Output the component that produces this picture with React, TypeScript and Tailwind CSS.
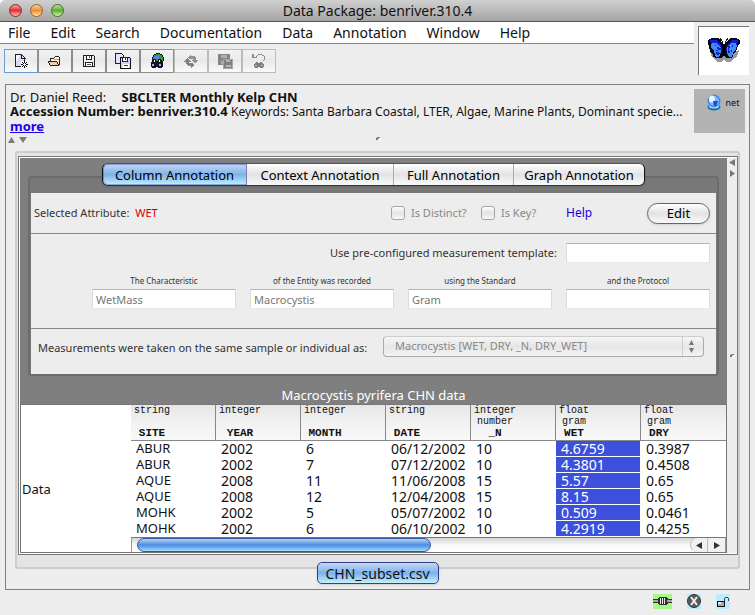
import type { ReactNode } from "react";

const menus = ["File", "Edit", "Search", "Documentation", "Data", "Annotation", "Window", "Help"];

const columns = [
  { type: "string", unit: "", name: "SITE" },
  { type: "integer", unit: "", name: "YEAR" },
  { type: "integer", unit: "", name: "MONTH" },
  { type: "string", unit: "", name: "DATE" },
  { type: "integer", unit: "number", name: "_N" },
  { type: "float", unit: "gram", name: "WET" },
  { type: "float", unit: "gram", name: "DRY" },
];

const rows = [
  ["ABUR", "2002", "6", "06/12/2002", "10", "4.6759", "0.3987"],
  ["ABUR", "2002", "7", "07/12/2002", "10", "4.3801", "0.4508"],
  ["AQUE", "2008", "11", "11/06/2008", "15", "5.57", "0.65"],
  ["AQUE", "2008", "12", "12/04/2008", "15", "8.15", "0.65"],
  ["MOHK", "2002", "5", "05/07/2002", "10", "0.509", "0.0461"],
  ["MOHK", "2002", "6", "06/10/2002", "10", "4.2919", "0.4255"],
];

function Icon({ children, w = 18, h = 16 }: { children: ReactNode; w?: number; h?: number }) {
  return (
    <svg width={w} height={h} viewBox={`0 0 ${w} ${h}`} shapeRendering="crispEdges" aria-hidden="true">
      {children}
    </svg>
  );
}

const NewIcon = () => (
  <Icon>
    <path d="M3.5 1.5h6l3 3v9h-9z" fill="#d9d9fb" stroke="#222" />
    <path d="M4 2h4l-4 7z" fill="#fff" />
    <path d="M9.500 1v4h4" fill="none" stroke="#222" />
    <path d="M9 8h8v8H9z" fill="#f3f3f3" />
    <path d="M12 8h1v2h-1zM12 13h1v2h-1zM9 11h2v1H9zM14 11h2v1h-2zM10 9h1v1h-1zM14 9h1v1h-1zM10 13h1v1h-1zM14 13h1v1h-1zM11 10h1v1h-1zM13 10h1v1h-1zM11 12h1v1h-1zM13 12h1v1h-1z" fill="#111" />
  </Icon>
);
const OpenIcon = () => (
  <Icon>
    <path d="M4 5h4l1-1h4l1 1v7h-1l-9 0z" fill="#fff3da" />
    <path d="M4 5h4v1H4zM8 4h1v1H8zM9 3h4v1H9zM13 4h1v8h-1zM4 6h1v2H4z" fill="#222" />
    <path d="M2 8h9v1H2zM2 9h1v1H2zM3 10h1v2H3zM4 12h9v1H4zM11 9h1v2h-1zM12 11h1v1h-1z" fill="#222" />
    <path d="M3 9h8v1H3zM4 10h7v1H4zM4 11h8v1H4z" fill="#f4d0a0" />
    <path d="M8 6h5v1H8z" fill="#c9a06a" />
  </Icon>
);
const SaveIcon = () => (
  <Icon>
    <path d="M3.500 2.500h10l1 1v10h-11z" fill="#eee" stroke="#222" />
    <path d="M6.500 2.500h5v4h-5zM5.500 9.500h7v4h-7z" fill="#fff" stroke="#222" />
    <path d="M9.500 3v2M7 11.500h4" stroke="#555" />
  </Icon>
);
const SaveAllIcon = () => (
  <Icon>
    <path d="M1.500 .5h6l2 2v8h-8z" fill="#e2e2ff" stroke="#222" />
    <path d="M6.500 4.500h9l1 1v10h-10z" fill="#cfcffd" stroke="#111" />
    <path d="M8.500 4.500h5v4h-5z" fill="#fff" stroke="#222" />
    <path d="M9 11h6v4H9z" fill="#fff" />
    <path d="M11.500 5v2M10 12.500h4" stroke="#333" />
  </Icon>
);
const SearchIcon = () => (
  <Icon>
    <circle cx="10" cy="6" r="5.500" fill="#2f9936" stroke="#111" />
    <path d="M6 3h5v3H8v2H5zM12 6h2v3h-2z" fill="#5a83dc" />
    <path d="M3.500 9.500l2-3h2l1 3h1l1-3h2l2 4v3l-2 1h-2l-1-2h-1l-1 2h-3l-1-2z" fill="#151530" stroke="#111" />
    <path d="M4 11h2v2H4zM11 11h2v2h-2z" fill="#a9acef" />
    <path d="M6 7h1v2H6zM11 7h1v2h-1z" fill="#fff" />
  </Icon>
);
const RefreshIcon = () => (
  <Icon>
    <path d="M6 4l3-3v2h3l2 2v2h2l-3 4-4-4h2V6H8v1z" fill="#929292" />
    <path d="M12 12l-3 3v-2H6l-2-2V9H2l3-4 4 4H7v1h3V9z" fill="#838383" />
  </Icon>
);
const SavesOffIcon = () => (
  <Icon>
    <path d="M2 1h12v11H2z" fill="#858585" />
    <path d="M5 2h6v3H5zM5 8h3v3H5z" fill="#b0b0b0" />
    <path d="M7.500 6.500h9v9h-9z" fill="#808080" stroke="#a5a5a5" />
    <path d="M10 7h4v2h-4zM10 12h5v2h-5z" fill="#b5b5b5" />
  </Icon>
);
const ReSearchIcon = () => (
  <Icon>
    <path d="M3 1h1v3h3v1H2V1zM6 3h1v1H6zM7 2h1v1H7zM8 1h4v1H8zM12 2h2v1h-2zM14 3h1v4h-1zM13 7h1v1h-1z" fill="#8c8c8c" />
    <path d="M4 11l2-2h2l1 2 1-2h2l2 3v2l-2 1h-2l-1-2-1 2H5l-1-2z" fill="#808080" />
    <path d="M5 12h2v1H5zM11 12h2v1h-2z" fill="#b8b8b8" />
  </Icon>
);

const tools = [
  { label: "New data package", icon: <NewIcon /> },
  { label: "Open", icon: <OpenIcon /> },
  { label: "Save", icon: <SaveIcon /> },
  { label: "Save copies", icon: <SaveAllIcon /> },
  { label: "Search", icon: <SearchIcon /> },
  { label: "Refresh", icon: <RefreshIcon />, off: true },
  { label: "Save search", icon: <SavesOffIcon />, off: true },
  { label: "Revise search", icon: <ReSearchIcon />, off: true },
];

function Butterfly() {
  return (
    <svg width="34" height="28" viewBox="0 0 34 28" shapeRendering="crispEdges" aria-hidden="true">
      <path d="M3 13l5 2 4 5 5-3 5 3 5-5 5-2-2 7-3 1-3 4h-4l-3-2-3 2h-4l-3-4-3-2z" fill="#999" />
      <path d="M13 1l2 3 1 3M21 1l-2 3-1 3" stroke="#222" fill="none" />
      <path d="M1 3l4-2h6l3 3 2 3h2l2-3 3-3h6l4 2v3l-2 3-2 6-3 2v3l-3 1h-4l-2-4-2 4H9l-3-1v-3l-3-2-1-6-1-3z" fill="#070716" />
      <path d="M3 3h6l5 5 1 6-2-1-3-3-4 1-2-4zM31 3h-6l-5 5-1 6 2-1 3-3 4 1 2-4z" fill="#171bdc" />
      <path d="M5 6h5l4 5v5l-2 4h-3l-2-6-2-2-1-3zM29 6h-5l-4 5v5l2 4h3l2-6 2-2 1-3z" fill="#3e8cf5" />
      <path d="M10 10h2v1h2v2h-3v1H9v-1h2zM9 15h3v1h2v1h-2v1h-2zM21 9h2v2h-1v3h1v2h-2zM25 8h1v2h-1zM24 13h1v2h-1zM8 8h1v1H8z" fill="#1720c7" />
      <path d="M16 7h2v12h-2z" fill="#000" />
    </svg>
  );
}

const seg = "h-[21px] border-r border-[#aaa] text-[13px] leading-[20px] whitespace-nowrap text-black last:border-r-0 last:rounded-r-[5px]";
const glossy = "bg-linear-to-b from-white via-[#e3e3e3] to-[#fafafa]";
const aqua = "bg-linear-to-b from-[#c5d8f1] via-[#7db2eb] to-[#c4f0ff]";
const field =
  "block h-5 w-36 border border-t-[#b5b5b5] border-x-[#dcdcdc] border-b-[#e8e8e8] bg-white px-[3px] text-[11px] leading-4 text-[#777]";

function Dimple() {
  return (
    <svg width="5" height="4" viewBox="0 0 5 4" aria-hidden="true">
      <path d="M0 3V1l2-1h2v1L2 2v1z" fill="#777" />
      <path d="M2 2l2-1 1 2-2 1z" fill="#fff" />
    </svg>
  );
}

function Field({ label, value }: { label: string; value: string }) {
  return (
    <label className="block w-36">
      <span className="block h-[15px] text-center text-[8px] leading-[13px]">{label}</span>
      <input className={field} defaultValue={value} disabled />
    </label>
  );
}

export default function App() {
  return (
    <div className="min-h-screen bg-[#ededed] font-['Noto_Sans',sans-serif] text-[#111]">
      <header className="bg-white">
        <div className="relative flex h-[22px] items-center justify-center rounded-t-[5px] border-b border-[#555] bg-linear-to-b from-[#d0d0d0] to-[#a5a5a5]">
          <div className="absolute left-[9px] flex gap-2">
            <button aria-label="Close" className="size-[13px] rounded-full border border-[#8b2a2a] bg-linear-to-b from-[#e8a0a0] via-[#dd2c36] to-[#ffb8b8]" />
            <button aria-label="Minimise" className="size-[13px] rounded-full border border-[#9b6320] bg-linear-to-b from-[#f2cfa0] via-[#ec8f2e] to-[#ffe8a0]" />
            <button aria-label="Zoom" className="size-[13px] rounded-full border border-[#3d7421] bg-linear-to-b from-[#b8dca0] via-[#62aa38] to-[#d4f8a0]" />
          </div>
          <h1 className="text-[14px] leading-5">Data Package: benriver.310.4</h1>
        </div>
      </header>

      <div className="flex">
        <div className="min-w-0 flex-1">
          <nav className="flex h-[22px] gap-5 border-b border-[#888] bg-white pl-2">
            {menus.map((m) => (
              <button key={m} className="text-[14px] leading-[21px]">
                {m}
              </button>
            ))}
          </nav>
          <div className="flex pt-[5px] pl-1">
            {tools.map((t, i) => (
              <button
                key={t.label}
                aria-label={t.label}
                disabled={t.off}
                className={`flex h-6 w-[34px] items-center justify-center border bg-linear-to-b from-[#f2f2f2] via-[#e9e9e9] to-[#fafafa] ${
                  i === 0 ? "border-[#6b9bd0]" : t.off ? "border-[#bbb]" : "border-[#8c8c8c]"
                }`}
              >
                {t.icon}
              </button>
            ))}
          </div>
        </div>
        <div className="h-[62px] w-[61px] pt-1 pl-1">
          <div className="flex h-[49px] w-[51px] items-center justify-center border-t border-l border-[#777] bg-white">
            <Butterfly />
          </div>
        </div>
      </div>

      <main className="mx-[5px] border border-[#808080] pb-[5px]">
        <div className="flex justify-between pt-1 pr-1 pl-1">
          <div className="min-w-0 flex-1 pt-px text-[13px] leading-[14px] whitespace-nowrap">
            <p>
              Dr. Daniel Reed: <b className="ml-3">SBCLTER Monthly Kelp CHN</b>
            </p>
            <p>
              <b>Accession Number: benriver.310.4</b>{" "}
              <span className="text-[12px]">Keywords: Santa Barbara Coastal, LTER, Algae, Marine Plants, Dominant specie...</span>
            </p>
            <a href="#more" className="font-bold text-[#1a00ee] underline">
              more
            </a>
          </div>
          <div className="flex h-11 w-[51px] justify-center gap-1 bg-[#b3b3b3] pt-[5px] pl-[6px]">
            <svg width="16" height="17" viewBox="0 0 16 17" aria-hidden="true">
              <ellipse cx="8" cy="13" rx="6.500" ry="3.500" fill="#176bb5" />
              <ellipse cx="8" cy="12" rx="5" ry="2.500" fill="#b8e9ff" />
              <circle cx="8" cy="7" r="6.500" fill="#4389e4" />
              <circle cx="8" cy="7" r="5" fill="#75b7fb" />
              <ellipse cx="6" cy="5" rx="3" ry="3.500" fill="#e8f5ff" />
              <path d="M7 7h5l-2 5H8z" fill="#1b4ccd" />
            </svg>
            <span className="text-[9px] leading-[18px]">net</span>
          </div>
        </div>
        <div className="flex h-[18px] items-start justify-between pt-1 pl-[2px]">
          <svg width="20" height="6" viewBox="0 0 20 6" className="text-[#7c7c7c]" aria-hidden="true">
            <path d="M0 6l3.500-6L7 6zM11 0h8l-4 6z" fill="currentColor" />
          </svg>
          <Dimple />
          <span className="w-5" />
        </div>

        <section className="mx-[9px] rounded-[3px] border-2 border-[#ccc] bg-[#e4e4e4] pt-[3px] pb-[12px]">
          <div className="ml-px flex border border-[#777] bg-white py-px pl-px">
            <div className="min-w-0 flex-1">
              <div className="bg-[#7f7f7f] px-2 pt-[5px]">
                <div className="relative z-10 mx-auto flex w-[543px] rounded-[6px] border border-t-[#555] border-b-[#333] shadow-sm" role="tablist">
                  <button role="tab" aria-selected="true" className={`${seg} ${aqua} w-[144px] rounded-l-[5px] outline-1 -outline-offset-1 outline-[#2f3fa5]/40`}>Column Annotation</button>
                  <button role="tab" className={`${seg} ${glossy} w-[147px]`}>Context Annotation</button>
                  <button role="tab" className={`${seg} ${glossy} w-[120px]`}>Full Annotation</button>
                  <button role="tab" className={`${seg} ${glossy} flex-1`}>Graph Annotation</button>
                </div>
                <form className="-mt-[10px] rounded-[4px] border-2 border-[#6c6c6c] bg-[#787878] px-px pt-[15px]" onSubmit={(e) => e.preventDefault()}>
                  <div className="bg-[#ededed] text-[#333]">
                    <div className="flex h-[41px] items-center justify-end gap-[14px] border-b border-[#888] pr-[6px] pl-[3px] text-[11px]">
                      <p className="mr-auto">
                        Selected Attribute: <span className="ml-[3px] text-[#d00000]">WET</span>
                      </p>
                      <div className="flex w-[161px] text-[#888]">
                        {["Is Distinct?", "Is Key?"].map((t) => (
                          <label key={t} className="flex w-[90px] shrink-0 items-center gap-[6px] last:w-[71px]">
                            <input type="checkbox" disabled className={`size-[14px] appearance-none rounded-[3px] border border-[#a5a5a5] ${glossy}`} />
                            {t}
                          </label>
                        ))}
                      </div>
                      <div className="flex w-36 items-center justify-between">
                        <a href="#help" className="text-[12px] text-[#1a00dd]">Help</a>
                        <button className={`h-[21px] w-[63px] rounded-full border border-[#666] text-[13px] leading-[18px] text-black shadow-sm ${glossy}`}>Edit</button>
                      </div>
                    </div>
                    <div className="h-[95px] border-b border-[#888] pt-[9px] pr-[6px]">
                      <label className="flex items-center justify-end gap-[9px] text-[11px]">
                        Use pre-configured measurement template:
                        <input className={field} disabled />
                      </label>
                      <div className="mt-[11px] flex justify-end gap-[14px]">
                        <Field label="The Characteristic" value="WetMass" />
                        <Field label="of the Entity was recorded" value="Macrocystis" />
                        <Field label="using the Standard" value="Gram" />
                        <Field label="and the Protocol" value="" />
                      </div>
                    </div>
                    <div className="flex h-[45px] items-start justify-between pt-[7px] pr-3 pl-[7px]">
                      <label htmlFor="sample" className="pt-[2px] text-[11px] leading-5 whitespace-nowrap">
                        Measurements were taken on the same sample or individual as:
                      </label>
                      <div className="relative">
                        <select
                          id="sample"
                          disabled
                          className="block h-[21px] w-[321px] appearance-none rounded-[4px] border border-[#aaa] border-t-[#ccc] bg-linear-to-b from-[#f6f6f6] via-[#e6e6e6] to-[#f4f4f4] pb-[2px] pl-[11px] text-[11px] leading-4 text-[#888] opacity-100"
                        >
                          <option>Macrocystis [WET, DRY, _N, DRY_WET]</option>
                        </select>
                        <svg width="21" height="19" viewBox="0 0 21 19" className="absolute top-px right-px" aria-hidden="true">
                          <path d="M.5 0v19" stroke="#ccc" />
                          <path d="M7 8l2.500-5L12 8zM7 11h5l-2.500 5z" fill="#777" />
                        </svg>
                      </div>
                    </div>
                  </div>
                </form>
                <h2 className="pt-[10px] text-center text-[13px] leading-[18px] text-white">Macrocystis pyrifera CHN data</h2>
              </div>

              <div className="flex border border-[#777] bg-white">
                <div className="flex w-[110px] shrink-0 items-center pt-[22px] pl-px text-[13px]">Data</div>
                <div className="min-w-0 flex-1">
                  <table className="w-full table-fixed border-separate border-spacing-0">
                    <thead>
                      <tr>
                        {columns.map((c) => (
                          <th
                            key={c.name}
                            className="border-r border-b border-[#888] bg-linear-to-b from-[#e6e6e6] via-[#f2f2f2] to-[#f8f8f8] p-0 pl-[3px] text-left align-top font-['Liberation_Mono',monospace] text-[10px] leading-[11px] font-normal last:border-r-0"
                          >
                            <span className="inline-block text-center align-top">
                              <span className="block">{c.type}</span>
                              <span className="block h-[11px]">{c.unit}</span>
                              <span className="block h-[13px] text-[11px] leading-[13px] font-bold">{c.name}</span>
                            </span>
                          </th>
                        ))}
                      </tr>
                    </thead>
                    <tbody>
                      {rows.map((r, i) => (
                        <tr key={i}>
                          {r.map((v, j) => (
                            <td
                              key={j}
                              className={`h-4 border-r border-b border-white p-0 pl-[5px] leading-[15px] ${j === 0 ? "text-[13px]" : "text-[14px]"} ${j === 5 ? "bg-[#3c50dc] text-white" : ""}`}
                            >
                              {v}
                            </td>
                          ))}
                        </tr>
                      ))}
                    </tbody>
                  </table>
                  <div className="flex h-[15px] border border-t-[#777] border-x-[#999] border-b-0 bg-linear-to-b from-[#d5d5d5] via-[#f8f8f8] to-white pl-[5px]">
                    <div className="w-1/2 rounded-full border border-[#3557a5] bg-linear-to-b from-[#b8d2f2] via-[#4a8de0] to-[#a2dcff]" />
                    <div className="ml-auto flex rounded-l-full border-l border-[#bbb] bg-[#f1f1f1]">
                      <button aria-label="Scroll left" className="flex w-[17px] items-center justify-center border-r border-[#bbb]">
                        <svg width="6" height="7" viewBox="0 0 6 7"><path d="M6 0v7L0 3.500z" fill="#333" /></svg>
                      </button>
                      <button aria-label="Scroll right" className="flex w-[17px] items-center justify-center">
                        <svg width="6" height="7" viewBox="0 0 6 7"><path d="M0 0v7l6-3.500z" fill="#333" /></svg>
                      </button>
                    </div>
                  </div>
                </div>
              </div>
            </div>
            <div className="flex w-[10px] flex-col items-center justify-between bg-[#ededed]">
              <svg width="6" height="20" viewBox="0 0 6 20" aria-hidden="true">
                <path d="M6 1v7L0 4.500zM1 12v7l5-3.500z" fill="#777" />
              </svg>
              <Dimple />
              <span className="h-5" />
            </div>
          </div>
        </section>
        <div className="relative -mt-[7px] flex justify-center">
          <button className={`h-[22px] w-[122px] rounded-[5px] border border-[#30408f] text-[14px] leading-[19px] shadow-sm ${aqua}`}>
            CHN_subset.csv
          </button>
        </div>
      </main>

      <footer className="flex justify-end gap-[15px] pt-1 pr-[25px]">
        <svg width="19" height="15" viewBox="0 0 19 15" shapeRendering="crispEdges" aria-hidden="true">
          <path d="M0 0h19v15H0z" fill="#a3fa83" />
          <path d="M0 5h4l2-2h7l2 2h4v4h-4l-2 2H6L4 9H0z" fill="#333" />
          <path d="M0 6h5v2H0zM14 6h5v2h-5z" fill="#aaa" />
          <path d="M7 4h1v6H7zM9 4h1v6H9zM11 4h1v6h-1z" fill="#e8e8e8" />
        </svg>
        <svg width="14" height="15" viewBox="0 0 14 15" aria-hidden="true">
          <path d="M0 0h14v15H0z" fill="#bcecff" />
          <circle cx="7" cy="7" r="6.500" fill="#5a5a5a" stroke="#333" />
          <path d="M4 3l6 8M10 3l-6 8" stroke="#eee" strokeWidth="2" />
        </svg>
        <svg width="14" height="15" viewBox="0 0 14 15" shapeRendering="crispEdges" aria-hidden="true">
          <path d="M0 0h14v15H0z" fill="#bcecff" />
          <path d="M8.500 7V4.500l1-1h2l1 1V7" fill="none" stroke="#444" />
          <path d="M1.500 7.500h7v5h-7z" fill="#aaa" stroke="#111" />
          <path d="M2 8h3v2H2z" fill="#eee" />
        </svg>
      </footer>
    </div>
  );
}
